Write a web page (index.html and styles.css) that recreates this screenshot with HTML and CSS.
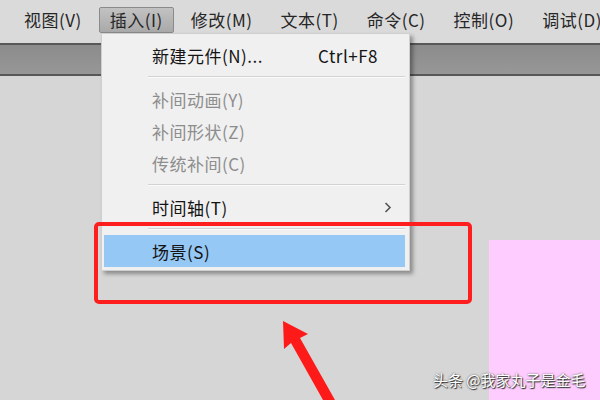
FILE: index.html
```html
<!DOCTYPE html>
<html lang="zh-CN">
<head>
    <meta charset="utf-8">
    <title>插入菜单</title>
    <link rel="stylesheet" href="styles.css">
</head>
<body>
    <div class="app">
        <nav class="menubar">
            <span class="menu-item">视图(V)</span>
            <span class="menu-item active">插入(I)</span>
            <span class="menu-item">修改(M)</span>
            <span class="menu-item">文本(T)</span>
            <span class="menu-item">命令(C)</span>
            <span class="menu-item">控制(O)</span>
            <span class="menu-item">调试(D)</span>
        </nav>

        <div class="timeline-bar"></div>

        <div class="stage">
            <div class="stage-object"></div>
        </div>

        <!-- Insert menu dropdown -->
        <div class="dropdown">
            <div class="drop-item">
                <span>新建元件(N)...</span>
                <span class="shortcut">Ctrl+F8</span>
            </div>
            <div class="separator"></div>
            <div class="drop-item disabled">补间动画(Y)</div>
            <div class="drop-item disabled">补间形状(Z)</div>
            <div class="drop-item disabled">传统补间(C)</div>
            <div class="separator"></div>
            <div class="drop-item has-sub">
                <span>时间轴(T)</span>
                <svg class="chevron" width="8" height="11" viewBox="0 0 8 11">
                    <path d="M1.5 1 L6 5.5 L1.5 10" fill="none" stroke="#555" stroke-width="1.6"/>
                </svg>
            </div>
            <div class="separator"></div>
            <div class="drop-item selected">场景(S)</div>
        </div>

        <!-- annotation -->
        <div class="callout"></div>
        <svg class="arrow" width="600" height="400" viewBox="0 0 600 400">
            <polygon points="283,321 308,334 300,338 335,400 323,400 291,343 284,349" fill="#ff1a1a"/>
        </svg>

        <div class="watermark">头条 @我家丸子是金毛</div>
    </div>
</body>
</html>
```

FILE: styles.css
```css
* {
    box-sizing: border-box;
    margin: 0;
    padding: 0;
}

body {
    font-family: "Noto Sans CJK SC", "Noto Sans", sans-serif;
    background: #d6d6d6;
    color: #1b1b1b;
}

.app {
    position: relative;
    width: 600px;
    height: 400px;
    overflow: hidden;
    display: flex;
    flex-direction: column;
}

/* Menu bar */
.menubar {
    height: 43px;
    display: flex;
    align-items: flex-start;
    gap: 6px;
    padding: 7px 0 0 13px;
    background: #dadada;
    white-space: nowrap;
    font-size: 17px;
    letter-spacing: 0.5px;
}

.menu-item {
    height: 26px;
    line-height: 24px;
    padding: 0 10px;
    border: 1px solid transparent;
    border-radius: 2px;
    color: #262626;
}

.menu-item.active {
    background: linear-gradient(#c2c2c2, #a9a9a9);
    border-color: #8a8a8a;
}

.timeline-bar {
    height: 33px;
    border-top: 2px solid #585858;
    border-bottom: 2px solid #585858;
    background: linear-gradient(#8c8c8c, #979797);
}

.stage {
    flex: 1;
    position: relative;
    background: #d6d6d6;
}

.stage-object {
    position: absolute;
    left: 489px;
    top: 164px;
    right: 0;
    bottom: 0;
    background: #ffccff;
}

/* Dropdown */
.dropdown {
    position: absolute;
    left: 101px;
    top: 33px;
    width: 309px;
    padding: 5px 4px 3px 2px;
    background: #f0f0f0;
    border: 1px solid #cfcfcf;
    box-shadow: 3px 3px 4px rgba(0, 0, 0, 0.35);
    font-size: 17px;
    letter-spacing: 0.5px;
}

.drop-item {
    height: 32px;
    display: flex;
    align-items: center;
    padding: 0 27px 0 48px;
    color: #141414;
}

.drop-item.disabled {
    color: #8d8d8d;
}

.drop-item.has-sub {
    padding-right: 13px;
    justify-content: space-between;
}

.drop-item.selected {
    background: #95c8f4;
}

.shortcut {
    margin-left: auto;
}

.separator {
    height: 12px;
    position: relative;
}

.separator::before {
    content: "";
    position: absolute;
    left: 44px;
    right: 0;
    top: 5px;
    border-top: 1px solid #d2d2d2;
    border-bottom: 1px solid #fbfbfb;
}

/* Annotation */
.callout {
    position: absolute;
    left: 94px;
    top: 222px;
    width: 378px;
    height: 82px;
    border: 4px solid #ff1e1e;
    border-radius: 5px;
}

.arrow {
    position: absolute;
    left: 0;
    top: 0;
}

.watermark {
    position: absolute;
    left: 433px;
    top: 369px;
    font-size: 15px;
    color: #ffffff;
    text-shadow: 1px 1px 1px #333, 0 0 2px #555;
    white-space: nowrap;
}
```
